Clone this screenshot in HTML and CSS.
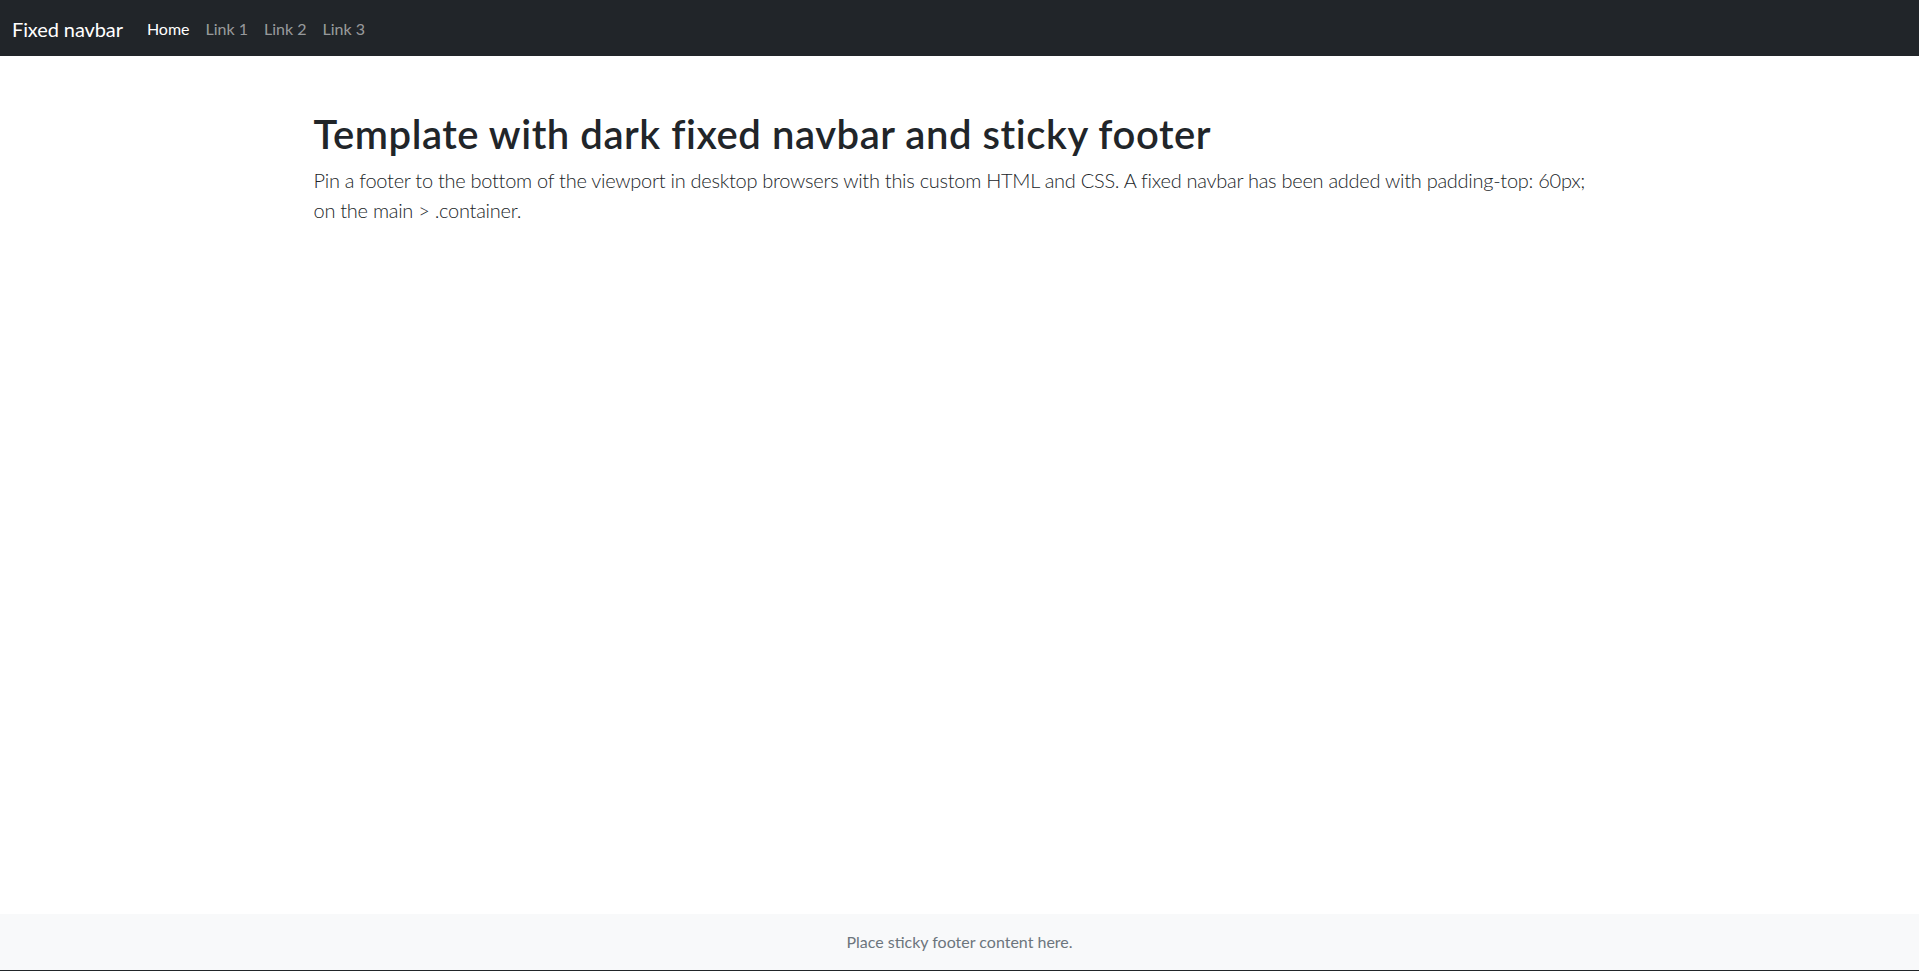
FILE: index.html
```html
<!DOCTYPE html>
<html lang="en">
<head>
<meta charset="utf-8">
<title>Sticky Footer Navbar Template</title>
<link rel="stylesheet" href="styles.css">
</head>
<body class="page">
<header class="navbar">
  <a class="brand" href="#">Fixed navbar</a>
  <nav class="nav">
    <a class="nav-link active" href="#">Home</a>
    <a class="nav-link" href="#">Link 1</a>
    <a class="nav-link" href="#">Link 2</a>
    <a class="nav-link" href="#">Link 3</a>
  </nav>
</header>
<main class="main">
  <div class="container">
    <h1 class="title">Template with dark fixed navbar and sticky footer</h1>
    <p class="lead">Pin a footer to the bottom of the viewport in desktop browsers with this custom HTML and CSS. A fixed navbar has been added with padding-top: 60px;<br>on the main &gt; .container.</p>
  </div>
</main>
<footer class="footer">
  <span class="muted">Place sticky footer content here.</span>
</footer>
<div class="edge"></div>
</body>
</html>
```

FILE: styles.css
```css
html, body {
  margin: 0;
  padding: 0;
}
.page {
  min-height: 100vh;
  display: flex;
  flex-direction: column;
  font-family: Lato, "Open Sans", sans-serif;
  font-size: 16px;
  line-height: 1.5;
  color: #212529;
  background: #fff;
}
.navbar {
  position: fixed;
  top: 0;
  left: 0;
  right: 0;
  height: 56px;
  box-sizing: border-box;
  padding: 1px 12px 0;
  display: flex;
  align-items: center;
  background: #212529;
}
.brand {
  font-size: 20px;
  letter-spacing: -0.1px;
  color: #fff;
  text-decoration: none;
  margin-right: 16px;
}
.nav {
  display: flex;
}
.nav-link {
  padding: 8px 8px;
  color: rgba(255, 255, 255, .55);
  text-decoration: none;
}
.nav-link.active {
  color: #fff;
}
.main {
  flex-shrink: 0;
  padding-top: 60px;
}
.container {
  max-width: 1320px;
  box-sizing: border-box;
  padding: 0 14px;
  margin: 0 auto;
}
.title {
  margin: 50px 0 7px;
  font-size: 40px;
  font-weight: 600;
  line-height: 1.2;
  letter-spacing: 0.55px;
}
.lead {
  margin: 0 0 16px;
  font-size: 20px;
  font-weight: 300;
  letter-spacing: -0.27px;
}
.footer {
  margin-top: auto;
  padding: 16px 0;
  text-align: center;
  background: #f8f9fa;
}
.muted {
  color: #6c757d;
}
.edge {
  height: 1px;
  flex-shrink: 0;
  background: #212529;
}
```
